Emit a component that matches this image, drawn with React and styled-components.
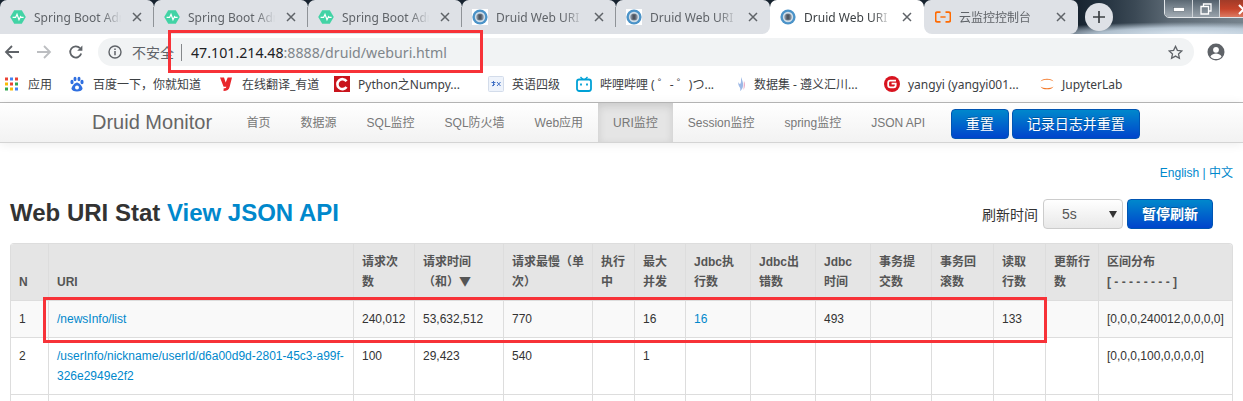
import React from "react";
import styled, { createGlobalStyle } from "styled-components";

const UI = `"Noto Sans", "Noto Sans CJK SC", sans-serif`;
const WEB = `"Liberation Sans", "Noto Sans CJK SC", sans-serif`;

const Global = createGlobalStyle`
  html, body { margin: 0; padding: 0; background: #fff; overflow: hidden; }
  body { width: 1243px; height: 401px; font-family: ${WEB}; text-spacing-trim: space-all; }
  * { box-sizing: border-box; }
`;

const Page = styled.div`
  position: relative;
  width: 1243px;
  height: 401px;
  overflow: hidden;
`;

/* ---------- tab strip ---------- */
const Strip = styled.div`
  display: flex;
  height: 34px;
  background:
    radial-gradient(ellipse 170px 13px at 1190px 35px, #dbe6f0 0, rgba(200, 216, 230, 0.85) 55%, transparent 100%),
    linear-gradient(90deg, #17232f 1077px, #22303d 1100px, #3b4955 1135px, #5d6a75 1170px, #76838d 1243px);
`;

const Tab = styled.div`
  position: relative;
  flex: 0 0 154px;
  min-width: 0;
  height: 34px;
  display: flex;
  align-items: center;
  padding-left: ${(p) => p.$pad || 10}px;
  font: 12px ${UI};
  color: ${(p) => (p.$active ? "#3c4043" : "#5f6368")};
  background: ${(p) => (p.$active ? "#fff" : "#dee1e6")};
  border-radius: 7px 7px ${(p) => (p.$roundRight ? 8 : 0)}px ${(p) => (p.$roundLeft ? 8 : 0)}px;
  z-index: ${(p) => (p.$active ? 0 : 1)};

  &::after {
    content: "";
    display: ${(p) => (p.$sep ? "block" : "none")};
    position: absolute;
    right: 0;
    top: 7px;
    height: 20px;
    width: 1px;
    background: #8f9398;
  }
`;

const Flare = styled.span`
  position: absolute;
  bottom: 0;
  width: 8px;
  height: 8px;
  background: #fff;
  left: ${(p) => (p.$side === "left" ? "-8px" : "auto")};
  right: ${(p) => (p.$side === "right" ? "-8px" : "auto")};
`;

const TabTitle = styled.span`
  flex: 1;
  min-width: 0;
  margin-left: 8px;
  white-space: nowrap;
  overflow: hidden;
  -webkit-mask-image: linear-gradient(90deg, #000 76%, transparent 97%);
  mask-image: linear-gradient(90deg, #000 76%, transparent 97%);
`;

const TabClose = styled.svg`
  flex: 0 0 10px;
  width: 10px;
  height: 10px;
  margin: 0 12px 0 8px;
`;

const NewTab = styled.div`
  flex: 0 0 28px;
  height: 28px;
  margin: 3px 0 0 7px;
  border-radius: 50%;
  background: #dee1e6;
  display: flex;
  align-items: center;
  justify-content: center;
  z-index: 1;
`;

const WindowControls = styled.div`
  position: absolute;
  top: -2px;
  left: 1164px;
  display: flex;
  width: 104px;
  height: 20px;
  border: 1px solid #e3e7ea;
  border-radius: 0 0 5px 5px;
  overflow: hidden;
`;

const WinBtn = styled.div`
  flex: 0 0 ${(p) => p.$w}px;
  display: flex;
  align-items: center;
  justify-content: center;
  padding-top: 2px;
  border-right: 1px solid #cfd4d8;
  background: ${(p) => p.$bg};
`;

/* ---------- toolbar ---------- */
const Toolbar = styled.div`
  height: 32px;
  display: flex;
  align-items: flex-end;
  background: #fff;
`;

const NavGroup = styled.div`
  flex: 0 0 98px;
  display: flex;
  gap: 8px;
`;

const NavIcon = styled.div`
  flex: 0 0 24px;
  height: 28px;
  display: flex;
  align-items: center;
  justify-content: center;
`;

const Omnibox = styled.div`
  width: 1096px;
  height: 28px;
  border-radius: 14px;
  background: #f1f3f4;
  display: flex;
  align-items: center;
  padding: 0 11px 0 10px;
`;

const Insecure = styled.span`
  margin-left: 10px;
  font: 14px ${UI};
  color: #5f6368;
  white-space: nowrap;
`;

const Divider = styled.span`
  width: 1px;
  height: 17px;
  margin: 0 9px 0 7px;
  background: #85888b;
`;

const Url = styled.span`
  flex: 1;
  font: 14.2px ${UI};
  color: #80868b;
  white-space: nowrap;
`;

const Host = styled.span`
  color: #202124;
`;

const Avatar = styled.div`
  flex: 0 0 18px;
  height: 18px;
  margin: 0 0 5px 13px;
  display: flex;
`;

/* ---------- bookmarks ---------- */
const Bookmarks = styled.div`
  height: 37px;
  display: flex;
  align-items: center;
  padding-left: 5px;
  background: #fff;
  border-bottom: 1px solid #b9b9b9;
`;

const Bookmark = styled.div`
  flex: 0 0 ${(p) => p.$w}px;
  display: flex;
  align-items: center;
  font: 12px ${UI};
  color: #3c4043;
  white-space: nowrap;
`;

const BookmarkIcon = styled.svg`
  flex: 0 0 16px;
  width: 16px;
  height: 16px;
  margin-right: ${(p) => p.$gap ?? 8}px;
`;

/* ---------- site navbar ---------- */
const Navbar = styled.div`
  height: 40px;
  display: flex;
  align-items: stretch;
  padding-left: 77px;
  background: linear-gradient(180deg, #ffffff, #f2f2f2);
  border-bottom: 1px solid #d4d4d4;
  box-shadow: 0 1px 10px rgba(0, 0, 0, 0.08);
  font-family: ${WEB};
`;

const Brand = styled.div`
  padding: 0 19.5px 0 15px;
  font-size: 20px;
  line-height: 39px;
  font-weight: 400;
  color: #666;
  white-space: nowrap;
`;

const NavItem = styled.div`
  padding: 0 15px;
  font-size: 12px;
  line-height: 40px;
  color: #777;
  white-space: nowrap;
  background: ${(p) => (p.$active ? "#e5e5e5" : "transparent")};
  box-shadow: ${(p) => (p.$active ? "inset 0 3px 8px rgba(0,0,0,0.125)" : "none")};
`;

const NavButtons = styled.div`
  display: flex;
  gap: 3px;
  padding: 6px 0 0 10.5px;
`;

const PrimaryButton = styled.div`
  height: 30px;
  padding: 0 14px;
  border: 1px solid #0055b3;
  border-radius: 4px;
  background: linear-gradient(180deg, #0088cc, #0044cc);
  color: #fff;
  font-size: 14px;
  font-weight: ${(p) => (p.$bold ? 700 : 400)};
  line-height: 28px;
  text-shadow: 0 -1px 0 rgba(0, 0, 0, 0.25);
  white-space: nowrap;
`;

/* ---------- content ---------- */
const Content = styled.div`
  padding: 22px 10px 0;
`;

const Lang = styled.div`
  height: 16px;
  text-align: right;
  font-size: 12px;
  line-height: 16px;
  color: #0088cc;
`;

const HeadRow = styled.div`
  display: flex;
  align-items: flex-start;
  justify-content: space-between;
  height: 62px;
  padding-top: 18px;
`;

const Title = styled.div`
  font-size: 24px;
  font-weight: 700;
  line-height: 26px;
  color: #333;
  margin-top: 1px;
  white-space: nowrap;
`;

const TitleLink = styled.span`
  color: #0088cc;
`;

const Refresh = styled.div`
  display: flex;
  align-items: center;
  margin-right: 20px;
  font-size: 14px;
  color: #333;
`;

const RefreshLabel = styled.span`
  margin-right: 5px;
`;

const SelectBox = styled.div`
  width: 80px;
  height: 30px;
  margin-right: 4px;
  padding-left: 18px;
  display: flex;
  align-items: center;
  justify-content: space-between;
  border: 1px solid #ccc;
  border-radius: 4px;
  background: linear-gradient(180deg, #ffffff, #e8e8e8);
  font-size: 14px;
  color: #555;
`;

const Caret = styled.svg`
  width: 8px;
  height: 7px;
  margin-right: 5px;
`;

const StatTable = styled.table`
  table-layout: fixed;
  width: 1223px;
  border-collapse: separate;
  border-spacing: 0;
  font-size: 12px;
  line-height: 20px;
  color: #333;
  border-right: 1px solid #ddd;
  border-top: 1px solid #ddd;
  border-radius: 4px 4px 0 0;
  overflow: hidden;
`;

const Th = styled.th`
  padding: 8px;
  text-align: left;
  vertical-align: bottom;
  font-weight: 700;
  color: #555;
  background: #e5e5e5;
  border-left: 1px solid #ddd;
`;

const SortArrow = styled.span`
  font-family: "Noto Sans CJK SC", sans-serif;
  font-weight: 400;
  line-height: 0;
`;

const Td = styled.td`
  padding: 8px;
  text-align: left;
  vertical-align: top;
  background: ${(p) => (p.$odd ? "#f9f9f9" : "#fff")};
  border-left: 1px solid #ddd;
  border-top: 1px solid #ddd;
  word-wrap: break-word;
`;

const Link = styled.span`
  color: #0088cc;
`;

const Highlight = styled.div`
  position: absolute;
  left: ${(p) => p.$x}px;
  top: ${(p) => p.$y}px;
  width: ${(p) => p.$w}px;
  height: ${(p) => p.$h}px;
  border: 3px solid #f73238;
  pointer-events: none;
  z-index: 5;
`;

/* ---------- drawings ---------- */
const SpringIcon = () => (
  <svg width="16" height="16" viewBox="0 0 16 16">
    <path d="M4.2 1.2h7.6L15.800 8l-4 6.800H4.200L.2 8z" fill="#42d3a5" />
    <path d="M2.600 8.400h3l1.400-3 2 5.400 1.600-3.200.6.8h2.400" fill="none" stroke="#fff" strokeWidth="1.2" />
  </svg>
);

const DruidIcon = () => (
  <svg width="16" height="16" viewBox="0 0 16 16">
    <rect width="16" height="16" fill="#fff" />
    <circle cx="8" cy="8" r="7.600" fill="#4b93c8" />
    <circle cx="8" cy="8" r="5.200" fill="#cfdde8" />
    <circle cx="8" cy="8" r="3.600" fill="#7c8794" />
    <path d="M6.400 5.400h3.200v5.200H6.400z" fill="#4d5560" />
  </svg>
);

const AliyunIcon = () => (
  <svg width="16" height="16" viewBox="0 0 16 16">
    <path d="M5.500 3.200H2.400Q.6 3.200.6 5v6q0 1.800 1.800 1.800h3.100M10.500 3.200h3.100q1.800 0 1.800 1.800v6q0 1.800-1.800 1.800h-3.100" fill="none" stroke="#ff6a00" strokeWidth="1.700" />
    <path d="M5.400 8h5.200" stroke="#ff6a00" strokeWidth="1.400" />
  </svg>
);

const CloseGlyph = () => (
  <TabClose viewBox="0 0 10 10">
    <path d="M1 1l8 8M9 1L1 9" stroke="#5f6368" strokeWidth="1.500" />
  </TabClose>
);

const COLS = [38, 305, 61, 89, 89, 42, 51, 65, 65, 55, 61, 62, 52, 53, 134];
const HEADERS = [
  "N", "URI", "请求次数", <>请求时间（和）<SortArrow>▼</SortArrow></>, "请求最慢（单次）", "执行中", "最大并发",
  "Jdbc执行数", "Jdbc出错数", "Jdbc时间", "事务提交数", "事务回滚数", "读取行数", "更新行数",
  <>区间分布<br />[ - - - - - - - - ]</>,
];
const ROWS = [
  ["1", "/newsInfo/list", "240,012", "53,632,512", "770", "", "16", "16", "", "493", "", "", "133", "", "[0,0,0,240012,0,0,0,0]"],
  ["2", "/userInfo/nickname/userId/d6a00d9d-2801-45c3-a99f-326e2949e2f2", "100", "29,423", "540", "", "1", "", "", "", "", "", "", "", "[0,0,0,100,0,0,0,0]"],
  ["\u00a0", "", "", "", "", "", "", "", "", "", "", "", "", "", ""],
];
const APPS = [
  ["#ea4335", 0, 1.5], ["#4285f4", 5, 1.5], ["#ea4335", 10, 1.5],
  ["#fbbc05", 0, 6.5], ["#ea4335", 5, 6.5], ["#34a853", 10, 6.5],
  ["#34a853", 0, 11.5], ["#fbbc05", 5, 11.5], ["#4285f4", 10, 11.5],
];

export default function App() {
  const tabs = [
    { t: "Spring Boot Admin", i: <SpringIcon />, sep: true },
    { t: "Spring Boot Admin", i: <SpringIcon />, sep: true },
    { t: "Spring Boot Admin", i: <SpringIcon />, sep: true },
    { t: "Druid Web URI Stat", i: <DruidIcon />, sep: true },
    { t: "Druid Web URI Stat", i: <DruidIcon />, roundRight: true },
    { t: "Druid Web URI Stat", i: <DruidIcon />, active: true },
    { t: "云监控控制台", i: <AliyunIcon />, roundLeft: true, roundRight: true, pad: 11 },
  ];

  return (
    <Page>
      <Global />
      <Strip>
        {tabs.map((tab, n) => (
          <Tab key={n} $active={tab.active} $sep={tab.sep} $roundLeft={tab.roundLeft} $roundRight={tab.roundRight} $pad={tab.pad}>
            {tab.active && <Flare $side="left" />}
            {tab.active && <Flare $side="right" />}
            {tab.i}
            <TabTitle>{tab.t}</TabTitle>
            <CloseGlyph />
          </Tab>
        ))}
        <NewTab>
          <svg width="12" height="12" viewBox="0 0 12 12">
            <path d="M6 0v12M0 6h12" stroke="#3c4043" strokeWidth="1.700" />
          </svg>
        </NewTab>
        <WindowControls>
          <WinBtn $w={28} $bg="linear-gradient(180deg,#56636e,#7d8993 50%,#a3acb4)">
            <svg width="12" height="5" viewBox="0 0 12 5"><rect x=".5" y=".5" width="11" height="4" fill="#fff" stroke="#59646e" strokeWidth=".6" /></svg>
          </WinBtn>
          <WinBtn $w={27} $bg="linear-gradient(180deg,#4e5c68,#75818b 50%,#98a2aa)">
            <svg width="12" height="12" viewBox="0 0 12 12"><path d="M3.500 3V1h7.500v7H9M1 3.500h7.500V11H1z" fill="none" stroke="#fff" strokeWidth="1.300" /></svg>
          </WinBtn>
          <WinBtn $w={47} $bg="linear-gradient(180deg,#9c3a28,#c5432a 55%,#dc7a62)">
            <svg width="11" height="11" viewBox="0 0 11 11"><path d="M1 1l9 9M10 1l-9 9" stroke="#fff" strokeWidth="2.200" /></svg>
          </WinBtn>
        </WindowControls>
      </Strip>

      <Toolbar>
        <NavGroup>
          <NavIcon>
            <svg width="16" height="16" viewBox="0 0 16 16"><path d="M15 8H2.200M8 2L2 8l6 6" fill="none" stroke="#5f6368" strokeWidth="1.800" /></svg>
          </NavIcon>
          <NavIcon>
            <svg width="16" height="16" viewBox="0 0 16 16"><path d="M1 8h12.800M8 2l6 6-6 6" fill="none" stroke="#bcbec1" strokeWidth="1.800" /></svg>
          </NavIcon>
          <NavIcon>
            <svg width="16" height="16" viewBox="0 0 16 16"><path d="M13.200 9.500A5.600 5.600 0 1 1 12 4.200" fill="none" stroke="#5f6368" strokeWidth="1.800" /><path d="M14.400 1.600v5.200H9.200z" fill="#5f6368" /></svg>
          </NavIcon>
        </NavGroup>
        <Omnibox>
          <svg width="14" height="14" viewBox="0 0 14 14"><circle cx="7" cy="7" r="6" fill="none" stroke="#5f6368" strokeWidth="1.400" /><path d="M7 6v4.200M7 3.400v1.500" stroke="#5f6368" strokeWidth="1.500" /></svg>
          <Insecure>不安全</Insecure>
          <Divider />
          <Url><Host>47.101.214.48</Host>:8888/druid/weburi.html</Url>
          <svg width="15" height="15" viewBox="0 0 15 15"><path d="M7.500 1.400l1.900 4 4.400.5-3.300 3 .9 4.400-3.900-2.200-3.900 2.200.9-4.400-3.300-3 4.400-.5z" fill="none" stroke="#5f6368" strokeWidth="1.300" /></svg>
        </Omnibox>
        <Avatar>
          <svg width="18" height="18" viewBox="0 0 18 18"><circle cx="9" cy="9" r="8.500" fill="#5f6368" /><circle cx="9" cy="6.800" r="2.900" fill="#fff" /><path d="M3.400 13.400c1.400-2.200 3.600-3 5.600-3s4.200.8 5.600 3c-1.300 1.700-3.300 2.700-5.600 2.700s-4.300-1-5.600-2.700z" fill="#fff" /></svg>
        </Avatar>
      </Toolbar>

      <Bookmarks>
        <Bookmark $w={64}>
          <BookmarkIcon viewBox="0 0 16 16" $gap={7}>
            {APPS.map(([c, x, y]) => <rect key={`${x}-${y}`} x={x} y={y} width="3" height="3" fill={c} />)}
          </BookmarkIcon>
          应用
        </Bookmark>
        <Bookmark $w={149}>
          <BookmarkIcon viewBox="0 0 16 16">
            <g fill="#2f6fe0">
              <ellipse cx="3" cy="6" rx="1.600" ry="2.200" /><ellipse cx="6" cy="3" rx="1.500" ry="2.300" /><ellipse cx="10" cy="3" rx="1.500" ry="2.300" /><ellipse cx="13" cy="6" rx="1.600" ry="2.200" />
              <path d="M8 6.500c2 0 5.500 4 5.500 6S11 15.500 8 15.500s-5.500-1-5.500-3 3.500-6 5.500-6z" />
            </g>
            <circle cx="8" cy="11.600" r="2" fill="#fff" />
          </BookmarkIcon>
          百度一下，你就知道
        </Bookmark>
        <Bookmark $w={116}>
          <BookmarkIcon viewBox="0 0 16 16">
            <path d="M2 1.500h4l1.700 5 2-5H14l-2.400 9.500C11 13.600 9 15 5.500 15l.2-2.800c2 0 2.400-.5 2.600-1.500H5.600z" fill="#e8262b" />
          </BookmarkIcon>
          在线翻译_有道
        </Bookmark>
        <Bookmark $w={154}>
          <BookmarkIcon viewBox="0 0 16 16">
            <rect width="16" height="16" fill="#c9141c" />
            <path d="M12.500 5.300A5 5 0 1 0 12.500 11" fill="none" stroke="#fff" strokeWidth="2.600" />
          </BookmarkIcon>
          Python之Numpy...
        </Bookmark>
        <Bookmark $w={88}>
          <BookmarkIcon viewBox="0 0 16 16">
            <rect x=".5" y=".5" width="15" height="15" rx="1" fill="#eef3fb" stroke="#d3dcea" />
            <path d="M3.500 6.500h4M5.500 5v5M4 10l3-2M9 6l3.500 4M12.500 6L9 10" stroke="#3f6fc4" strokeWidth="1" fill="none" />
          </BookmarkIcon>
          英语四级
        </Bookmark>
        <Bookmark $w={157}>
          <BookmarkIcon viewBox="0 0 16 16">
            <path d="M4.500 1l2.500 2.500M11.500 1L9 3.500" stroke="#00a1d6" strokeWidth="1.400" />
            <rect x="1" y="3.500" width="14" height="11.500" rx="2.200" fill="none" stroke="#00a1d6" strokeWidth="1.800" />
            <path d="M5 7.500v2M11 7.500v2" stroke="#00a1d6" strokeWidth="1.800" />
          </BookmarkIcon>
          哔哩哔哩 ( ゜- ゜)つ...
        </Bookmark>
        <Bookmark $w={151}>
          <BookmarkIcon viewBox="0 0 16 16" $gap={5}>
            <path d="M8 1c1 3 2.500 5 2 9-.3 2.500-1.500 4-3 5 .6-2 .4-3-.5-4C5.500 9.500 5 8 5.500 6 6 8 7 8.500 7.500 7.500 8.200 6 8 3.500 8 1z" fill="#9db9e6" />
            <path d="M11 5c1.500 2.500 1.300 6-.5 9 .3-3 0-6 .5-9z" fill="#e7a8c4" />
          </BookmarkIcon>
          数据集 - 遵义汇川...
        </Bookmark>
        <Bookmark $w={155}>
          <BookmarkIcon viewBox="0 0 16 16">
            <circle cx="8" cy="8" r="8" fill="#d8131f" />
            <path d="M12 4.700H6.300Q4.200 4.700 4.200 6.800v2.400q0 2.100 2.100 2.100h3.400q2-.1 2-2.100V7.700H7.600" fill="none" stroke="#fff" strokeWidth="1.800" />
          </BookmarkIcon>
          yangyi (yangyi001...
        </Bookmark>
        <Bookmark $w={90}>
          <BookmarkIcon viewBox="0 0 16 16" $gap={7}>
            <path d="M1.500 5.500C3 1.700 13 1.700 14.500 5.500 12 3.300 4 3.300 1.500 5.500zM1.500 10.500C3 14.300 13 14.300 14.500 10.500 12 12.700 4 12.700 1.500 10.500z" fill="#f37726" />
          </BookmarkIcon>
          JupyterLab
        </Bookmark>
      </Bookmarks>

      <Navbar>
        <Brand>Druid Monitor</Brand>
        <NavItem>首页</NavItem>
        <NavItem>数据源</NavItem>
        <NavItem>SQL监控</NavItem>
        <NavItem>SQL防火墙</NavItem>
        <NavItem>Web应用</NavItem>
        <NavItem $active>URI监控</NavItem>
        <NavItem>Session监控</NavItem>
        <NavItem>spring监控</NavItem>
        <NavItem>JSON API</NavItem>
        <NavButtons>
          <PrimaryButton>重置</PrimaryButton>
          <PrimaryButton>记录日志并重置</PrimaryButton>
        </NavButtons>
      </Navbar>

      <Content>
        <Lang>English | 中文</Lang>
        <HeadRow>
          <Title>Web URI Stat <TitleLink>View JSON API</TitleLink></Title>
          <Refresh>
            <RefreshLabel>刷新时间</RefreshLabel>
            <SelectBox>
              5s
              <Caret viewBox="0 0 8 7"><path d="M0 0h8L4 7z" fill="#333" /></Caret>
            </SelectBox>
            <PrimaryButton $bold>暂停刷新</PrimaryButton>
          </Refresh>
        </HeadRow>
        <StatTable>
          <colgroup>
            {COLS.map((w, i) => <col key={i} style={{ width: w }} />)}
          </colgroup>
          <thead>
            <tr>
              {HEADERS.map((h, i) => <Th key={i}>{h}</Th>)}
            </tr>
          </thead>
          <tbody>
            {ROWS.map((row, r) => (
              <tr key={r}>
                {row.map((cell, c) => (
                  <Td key={c} $odd={r === 0}>
                    {c === 1 || (c === 7 && cell) ? <Link>{cell}</Link> : cell}
                  </Td>
                ))}
              </tr>
            ))}
          </tbody>
        </StatTable>
      </Content>

      <Highlight $x={168} $y={30} $w={315} $h={43} />
      <Highlight $x={43} $y={297} $w={1004} $h={46} />
    </Page>
  );
}
